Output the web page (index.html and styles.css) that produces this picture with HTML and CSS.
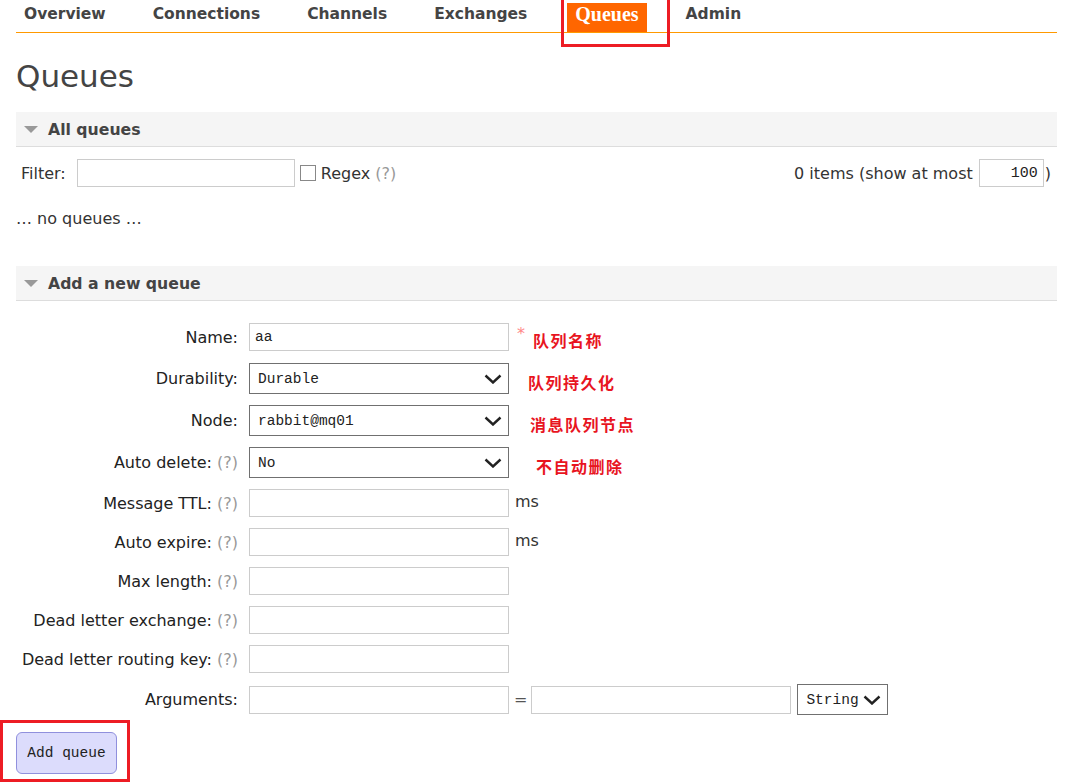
FILE: index.html
```html
<!DOCTYPE html>
<html>
<head>
<meta charset="utf-8">
<title>Queues</title>
<link rel="stylesheet" href="styles.css">
</head>
<body>
<div class="page">
  <ul class="nav">
    <li class="nav-item">Overview</li>
    <li class="nav-item">Connections</li>
    <li class="nav-item">Channels</li>
    <li class="nav-item">Exchanges</li>
    <li class="nav-item active">Queues</li>
    <li class="nav-item">Admin</li>
  </ul>
  <h1 class="title">Queues</h1>

  <div class="section-head"><span class="tri"></span>All queues</div>
  <div class="filter-row">
    <div class="filter-left">
      <span class="lbl">Filter:</span>
      <input class="inp filter-inp" type="text">
      <span class="chk"></span>
      <span class="lbl">Regex <span class="help">(?)</span></span>
    </div>
    <div class="filter-right">
      <span class="lbl">0 items (show at most</span>
      <input class="inp most-inp" type="text" value="100">
      <span class="lbl paren">)</span>
    </div>
  </div>
  <p class="empty">… no queues …</p>

  <div class="section-head add-head"><span class="tri"></span>Add a new queue</div>
  <div class="form">
    <div class="row">
      <label class="flabel">Name:</label>
      <div class="fctl">
        <input class="inp field mono" type="text" value="aa">
        <span class="req">*</span>
        <span class="note n1">队列名称</span>
      </div>
    </div>
    <div class="row">
      <label class="flabel">Durability:</label>
      <div class="fctl">
        <div class="sel field"><span class="mono">Durable</span><svg class="chev" width="18" height="10" viewBox="0 0 18 10"><path d="M1.5 1.5 L9 8.5 L16.5 1.5" fill="none" stroke="#222" stroke-width="2.4"/></svg></div>
        <span class="note n2">队列持久化</span>
      </div>
    </div>
    <div class="row">
      <label class="flabel">Node:</label>
      <div class="fctl">
        <div class="sel field"><span class="mono">rabbit@mq01</span><svg class="chev" width="18" height="10" viewBox="0 0 18 10"><path d="M1.5 1.5 L9 8.5 L16.5 1.5" fill="none" stroke="#222" stroke-width="2.4"/></svg></div>
        <span class="note n3">消息队列节点</span>
      </div>
    </div>
    <div class="row">
      <label class="flabel">Auto delete: <span class="help">(?)</span></label>
      <div class="fctl">
        <div class="sel field"><span class="mono">No</span><svg class="chev" width="18" height="10" viewBox="0 0 18 10"><path d="M1.5 1.5 L9 8.5 L16.5 1.5" fill="none" stroke="#222" stroke-width="2.4"/></svg></div>
        <span class="note n4">不自动删除</span>
      </div>
    </div>
    <div class="row">
      <label class="flabel">Message TTL: <span class="help">(?)</span></label>
      <div class="fctl top">
        <input class="inp field" type="text">
        <span class="unit">ms</span>
      </div>
    </div>
    <div class="row">
      <label class="flabel">Auto expire: <span class="help">(?)</span></label>
      <div class="fctl top">
        <input class="inp field" type="text">
        <span class="unit">ms</span>
      </div>
    </div>
    <div class="row">
      <label class="flabel">Max length: <span class="help">(?)</span></label>
      <div class="fctl"><input class="inp field" type="text"></div>
    </div>
    <div class="row">
      <label class="flabel">Dead letter exchange: <span class="help">(?)</span></label>
      <div class="fctl"><input class="inp field" type="text"></div>
    </div>
    <div class="row">
      <label class="flabel">Dead letter routing key: <span class="help">(?)</span></label>
      <div class="fctl"><input class="inp field" type="text"></div>
    </div>
    <div class="row">
      <label class="flabel">Arguments:</label>
      <div class="fctl">
        <input class="inp field" type="text">
        <span class="eq">=</span>
        <input class="inp field" type="text">
        <div class="sel small"><span class="mono">String</span><svg class="chev" width="18" height="10" viewBox="0 0 18 10"><path d="M1.5 1.5 L9 8.5 L16.5 1.5" fill="none" stroke="#222" stroke-width="2.4"/></svg></div>
      </div>
    </div>
  </div>
  <button class="btn">Add queue</button>
</div>
<div class="mark mark-nav"></div>
<div class="mark mark-btn"></div>
</body>
</html>
```
FILE: styles.css
```css
* { box-sizing: border-box; }
html, body { margin: 0; padding: 0; background: #fff; }
body {
  font-family: "DejaVu Sans", Verdana, sans-serif;
  font-size: 16px;
  color: #333;
  width: 1065px;
  height: 784px;
  overflow: hidden;
  position: relative;
}
.page { padding: 0 8px 0 16px; }

.nav {
  list-style: none;
  margin: 0;
  padding: 3px 0 0 0;
  display: flex;
  gap: 31px;
  border-bottom: 1px solid #f90;
  height: 33px;
}
.nav-item {
  height: 29px;
  line-height: 23px;
  padding: 0 8px 6px 8px;
  font-weight: bold;
  font-size: 15.5px;
  color: #444;
}
.nav-item.active {
  background: #f60;
  color: #fff;
  font-family: "Liberation Serif", "DejaVu Serif", serif;
  font-size: 20px;
  margin-left: 1px;
}

.title {
  margin: 0;
  padding: 23px 0 0 0;
  height: 79px;
  font-size: 31px;
  font-weight: normal;
  color: #444;
  line-height: 40px;
}

.section-head {
  height: 35px;
  background: #f5f5f5;
  border-bottom: 1px solid #ddd;
  display: flex;
  align-items: center;
  font-weight: bold;
  font-size: 15.7px;
  color: #444;
  padding-left: 8px;
}
.tri {
  width: 0; height: 0;
  border-left: 7px solid transparent;
  border-right: 7px solid transparent;
  border-top: 7px solid #999;
  margin-right: 10px;
  margin-top: 1px;
}

.filter-row {
  display: flex;
  justify-content: space-between;
  align-items: center;
  margin-top: 12px;
  padding: 0 6px 0 5px;
}
.filter-left, .filter-right { display: flex; align-items: center; }
.lbl { color: #333; }
.help { color: #999; }
.inp {
  height: 28px;
  border: 1px solid #ccc;
  background: #fff;
  padding: 0 5px;
  font-size: 15px;
  outline: none;
}
.filter-inp { width: 218px; margin-left: 11px; }
.chk {
  width: 16px; height: 16px;
  border: 1px solid #888;
  background: #fff;
  margin: 0 5px 0 5px;
}
.most-inp {
  width: 65px;
  margin-left: 6px;
  text-align: right;
  font-family: "Liberation Mono", monospace;
  font-size: 15px;
  color: #222;
}
.paren { margin-left: 1px; }

.empty { margin: 22px 0 38px 0; color: #333; }

.form {
  display: grid;
  grid-template-columns: 222px 1fr;
  column-gap: 11px;
  row-gap: 11px;
  margin-top: 21px;
}
.row { display: contents; }
.flabel {
  text-align: right;
  align-self: center;
  white-space: nowrap;
  color: #222;
}
.fctl { display: flex; align-items: center; }
.fctl.top .unit { align-self: flex-start; margin-top: 3px; }
.field { width: 260px; }
.mono {
  font-family: "Liberation Mono", monospace;
  font-size: 14.5px;
  color: #222;
}
.sel {
  height: 31px;
  border: 1px solid #707070;
  background: #fff;
  display: flex;
  align-items: center;
  justify-content: space-between;
  padding: 0 6px 0 8px;
}
.sel.small { width: 91px; margin-left: 6px; padding: 0 6px 0 8px; }
.req { color: #f88; margin-left: 8px; align-self: flex-start; margin-top: 2px; font-size: 16px; }
.note {
  font-family: "Noto Sans CJK SC", sans-serif;
  font-weight: bold;
  font-size: 16px;
  letter-spacing: 1.5px;
  color: #e8151f;
  margin-top: 6px;
}
.n1 { margin-left: 8px; }
.n2 { margin-left: 19px; }
.n3 { margin-left: 21px; }
.n4 { margin-left: 27px; }
.unit { margin-left: 6px; color: #333; }
.eq { margin: 0 4px 0 5px; color: #555; }

.btn {
  margin-top: 17px;
  width: 101px;
  height: 42px;
  background: #dcdcfc;
  border: 1px solid #9090dd;
  border-radius: 6px;
  font-family: "Liberation Mono", monospace;
  font-size: 14.5px;
  color: #222;
  padding: 0;
}

.mark {
  position: absolute;
  border: 3px solid #ed1c24;
  pointer-events: none;
}
.mark-nav { left: 561px; top: -3px; width: 109px; height: 50px; }
.mark-btn { left: 0; top: 720px; width: 130px; height: 62px; }
```
